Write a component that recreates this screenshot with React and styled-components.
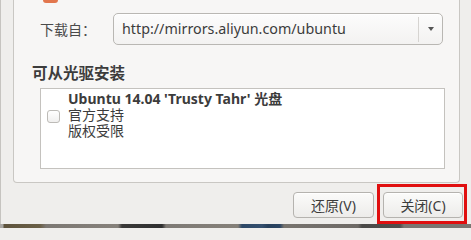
import React from 'react'
import styled, { createGlobalStyle } from 'styled-components'

const GlobalStyle = createGlobalStyle`
  html, body {
    margin: 0;
    padding: 0;
    background: #efeeec;
  }
  body {
    font-family: "Noto Sans", "Noto Sans CJK SC", sans-serif;
    color: #3c3c3c;
  }
`

const latin = `"Noto Sans", "Noto Sans CJK SC", sans-serif`

const Window = styled.div`
  width: 471px;
  height: 228px;
  display: flex;
  flex-direction: column;
  overflow: hidden;
`

const Main = styled.div`
  height: 224px;
  box-sizing: border-box;
  border-left: 1px solid #c6c4c0;
  background: #efeeec;
  display: flex;
  flex-direction: column;
`

const Panel = styled.div`
  margin-left: 12px;
  width: 447px;
  height: 183px;
  box-sizing: border-box;
  background: #f7f6f5;
  border: 1px solid #c9c7c3;
  border-top: none;
  border-radius: 0 0 4px 4px;
  display: flex;
  flex-direction: column;
`

const TabMark = styled.div`
  margin-left: 29px;
  width: 15px;
  height: 3px;
  background: #e2764d;
  border-radius: 0 0 8px 8px;
`

const SourceRow = styled.div`
  margin-top: 10px;
  padding-left: 26px;
  display: flex;
  align-items: center;
  height: 32px;
`

const Label = styled.span`
  width: 73px;
  font-family: ${latin};
  font-size: 14px;
  color: #4a4a4a;
`

const Combo = styled.div`
  width: 330px;
  height: 32px;
  box-sizing: border-box;
  border: 1px solid #b9b7b3;
  border-radius: 5px;
  background: linear-gradient(#fcfcfc, #f3f2f1);
  box-shadow: inset 0 1px 0 #ffffff;
  display: flex;
  align-items: center;
`

const ComboText = styled.span`
  flex: 1;
  padding-left: 8px;
  font-family: ${latin};
  font-size: 14.3px;
  color: #3c3c3c;
  padding-bottom: 1px;
`

const ComboButton = styled.div`
  width: 23px;
  height: 25px;
  border-left: 1px solid #d6d4d1;
  display: flex;
  align-items: center;
  justify-content: center;
`

const Arrow = styled.span`
  width: 0;
  height: 0;
  border-left: 3.5px solid transparent;
  border-right: 3.5px solid transparent;
  border-top: 4px solid #555555;
  margin-left: 1px;
`

const Heading = styled.div`
  margin-top: 18px;
  margin-left: 18px;
  font-family: ${latin};
  font-weight: 700;
  font-size: 15.5px;
  line-height: 20px;
  color: #3c3c3c;
`

const ListBox = styled.div`
  margin-top: 5px;
  margin-left: 26px;
  width: 405px;
  height: 81px;
  box-sizing: border-box;
  background: #ffffff;
  border: 1px solid #c4c2be;
  padding: 2px 0 0 6px;
`

const Item = styled.div`
  display: flex;
  align-items: center;
`

const Check = styled.span`
  width: 13px;
  height: 13px;
  box-sizing: border-box;
  border: 1px solid #bdbbb7;
  border-radius: 3px;
  background: linear-gradient(#ffffff, #f0efee);
  margin-top: 3px;
  margin-right: 8px;
`

const ItemText = styled.div`
  font-family: ${latin};
  font-size: 14px;
  line-height: 16px;
  color: #3c3c3c;
`

const ItemTitle = styled.div`
  font-weight: 700;
  font-size: 14px;
`

const ButtonRow = styled.div`
  margin-top: 9px;
  padding-right: 8px;
  display: flex;
  justify-content: flex-end;
  gap: 9px;
`

const Button = styled.button`
  position: relative;
  width: ${p => p.$w}px;
  height: 26px;
  box-sizing: border-box;
  border: 1px solid #b5b3af;
  border-radius: 4px;
  background: linear-gradient(#fbfbfa, #edecea);
  box-shadow: inset 0 1px 0 #ffffff;
  font-family: ${latin};
  font-size: 14px;
  color: #3c3c3c;
  padding: 0 0 1px;
  display: flex;
  align-items: center;
  justify-content: center;
`

const Highlight = styled.span`
  position: absolute;
  left: -7px;
  right: -5px;
  top: -9px;
  bottom: -7px;
  border: 3px solid #e00f0f;
  pointer-events: none;
`

const Desktop = styled.div`
  height: 4px;
  background: linear-gradient(90deg,
    #a8a6a2 0px, #a8a6a2 3px,
    #5e533c 4px, #6a5f47 40px,
    #7c7873 46px, #86817b 118px,
    #3a3938 122px, #2f2f30 162px,
    #7e7a75 166px, #858079 238px,
    #2d4866 242px, #344f6e 262px,
    #27405c 268px, #2b4563 280px,
    #77736e 284px, #6e6a66 358px,
    #4a4947 362px, #504e4b 400px,
    #7a7671 404px, #7a7671 471px);
`

export default function App() {
  return (
    <>
      <GlobalStyle />
      <Window>
        <Main>
          <Panel>
            <TabMark />
            <SourceRow>
              <Label>下载自：</Label>
              <Combo>
                <ComboText>http://mirrors.aliyun.com/ubuntu</ComboText>
                <ComboButton><Arrow /></ComboButton>
              </Combo>
            </SourceRow>
            <Heading>可从光驱安装</Heading>
            <ListBox>
              <Item>
                <Check />
                <ItemText>
                  <ItemTitle>Ubuntu 14.04 'Trusty Tahr' 光盘</ItemTitle>
                  <div>官方支持</div>
                  <div>版权受限</div>
                </ItemText>
              </Item>
            </ListBox>
          </Panel>
          <ButtonRow>
            <Button $w={81}>还原(V)</Button>
            <Button $w={80}>
              关闭(C)
              <Highlight />
            </Button>
          </ButtonRow>
        </Main>
        <Desktop />
      </Window>
    </>
  )
}
